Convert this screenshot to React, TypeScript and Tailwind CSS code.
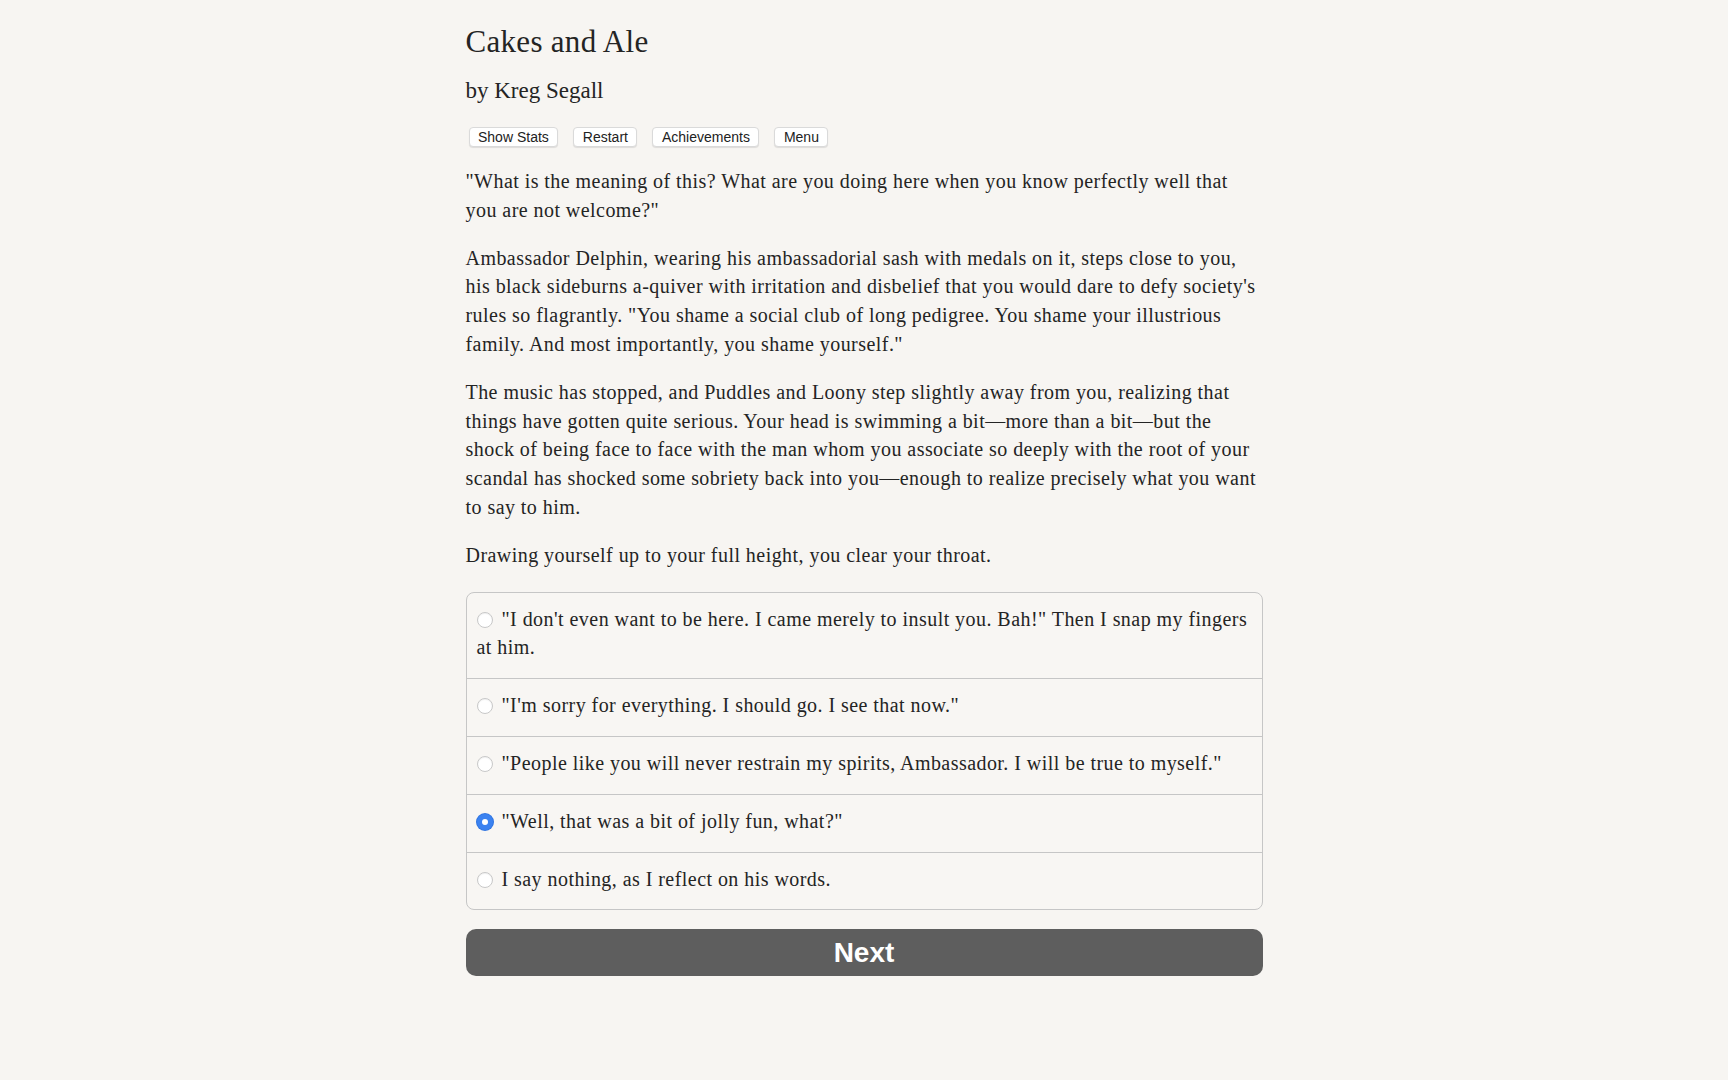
import React from "react";

const serif = { fontFamily: '"Liberation Serif", "Times New Roman", serif' };

const paragraphs: string[][] = [
  [
    "\"What is the meaning of this? What are you doing here when you know perfectly well that",
    "you are not welcome?\"",
  ],
  [
    "Ambassador Delphin, wearing his ambassadorial sash with medals on it, steps close to you,",
    "his black sideburns a-quiver with irritation and disbelief that you would dare to defy society's",
    "rules so flagrantly. \"You shame a social club of long pedigree. You shame your illustrious",
    "family. And most importantly, you shame yourself.\"",
  ],
  [
    "The music has stopped, and Puddles and Loony step slightly away from you, realizing that",
    "things have gotten quite serious. Your head is swimming a bit\u2014more than a bit\u2014but the",
    "shock of being face to face with the man whom you associate so deeply with the root of your",
    "scandal has shocked some sobriety back into you\u2014enough to realize precisely what you want",
    "to say to him.",
  ],
  ["Drawing yourself up to your full height, you clear your throat."],
];

const choices: string[][] = [
  [
    "\"I don't even want to be here. I came merely to insult you. Bah!\" Then I snap my fingers",
    "at him.",
  ],
  ["\"I'm sorry for everything. I should go. I see that now.\""],
  ["\"People like you will never restrain my spirits, Ambassador. I will be true to myself.\""],
  ["\"Well, that was a bit of jolly fun, what?\""],
  ["I say nothing, as I reflect on his words."],
];

function Lines({ lines }: { lines: string[] }) {
  return (
    <>
      {lines.map((line, i) => (
        <React.Fragment key={i}>
          {i > 0 && <br />}
          {line}
        </React.Fragment>
      ))}
    </>
  );
}

function Radio({ checked }: { checked: boolean }) {
  if (checked) {
    return (
      <span className="inline-block w-[16px] h-[16px] rounded-full bg-[#3b82f0] mr-[9px] align-[-2px] shadow-[0_0_0_1px_#2f74e0]">
        <span className="block w-[6px] h-[6px] m-[5px] rounded-full bg-white" />
      </span>
    );
  }
  return (
    <span className="inline-block w-[16px] h-[16px] rounded-full bg-white border border-[#c8c8c8] mr-[9px] align-[-2px] shadow-[inset_0_1px_1px_rgba(0,0,0,0.06)]" />
  );
}

export default function App() {
  const [selected, setSelected] = React.useState(3);

  return (
    <div className="min-h-screen w-full bg-[#f7f5f2] flex justify-center text-[#242424]">
      <div className="w-[797px] pt-[24px]" style={serif}>
        {/* Title */}
        <h1 className="text-[31px] leading-[36px] tracking-[0.3px]">Cakes and Ale</h1>
        <h2 className="mt-[17px] text-[23px] leading-[28px]">by Kreg Segall</h2>

        {/* Toolbar */}
        <div className="mt-[22px] ml-[3px] flex gap-[15px]">
          {["Show Stats", "Restart", "Achievements", "Menu"].map((label) => (
            <button
              key={label}
              className="h-[20px] px-[8.5px] rounded-[4px] bg-white border border-[#dadada] shadow-[0_1px_1px_rgba(0,0,0,0.1)] text-[14px] leading-none text-[#222]"
              style={{ fontFamily: '"Liberation Sans", Arial, sans-serif' }}
            >
              {label}
            </button>
          ))}
        </div>

        {/* Story */}
        <div className="mt-[20px] text-[20px] leading-[28.8px] tracking-[0.45px] whitespace-nowrap">
          {paragraphs.map((p, i) => (
            <p key={i} className={i > 0 ? "mt-[19px]" : ""}>
              <Lines lines={p} />
            </p>
          ))}
        </div>

        {/* Choices */}
        <div className="mt-[22px] border border-[#c6c6c6] rounded-[8px] bg-[#f8f6f3] overflow-hidden">
          {choices.map((c, i) => (
            <div
              key={i}
              onClick={() => setSelected(i)}
              className={
                "px-[10px] pt-[12px] pb-[16px] text-[20px] leading-[28.8px] tracking-[0.45px] whitespace-nowrap cursor-pointer" +
                (i < choices.length - 1 ? " border-b border-[#c6c6c6]" : "")
              }
            >
              <Radio checked={selected === i} />
              <Lines lines={c} />
            </div>
          ))}
        </div>

        {/* Next */}
        <button
          className="mt-[19px] w-full h-[47px] rounded-[10px] bg-[#5e5e5e] text-white text-[28px] font-bold"
          style={{ fontFamily: '"Liberation Sans", Arial, sans-serif' }}
        >
          Next
        </button>
      </div>
    </div>
  );
}
